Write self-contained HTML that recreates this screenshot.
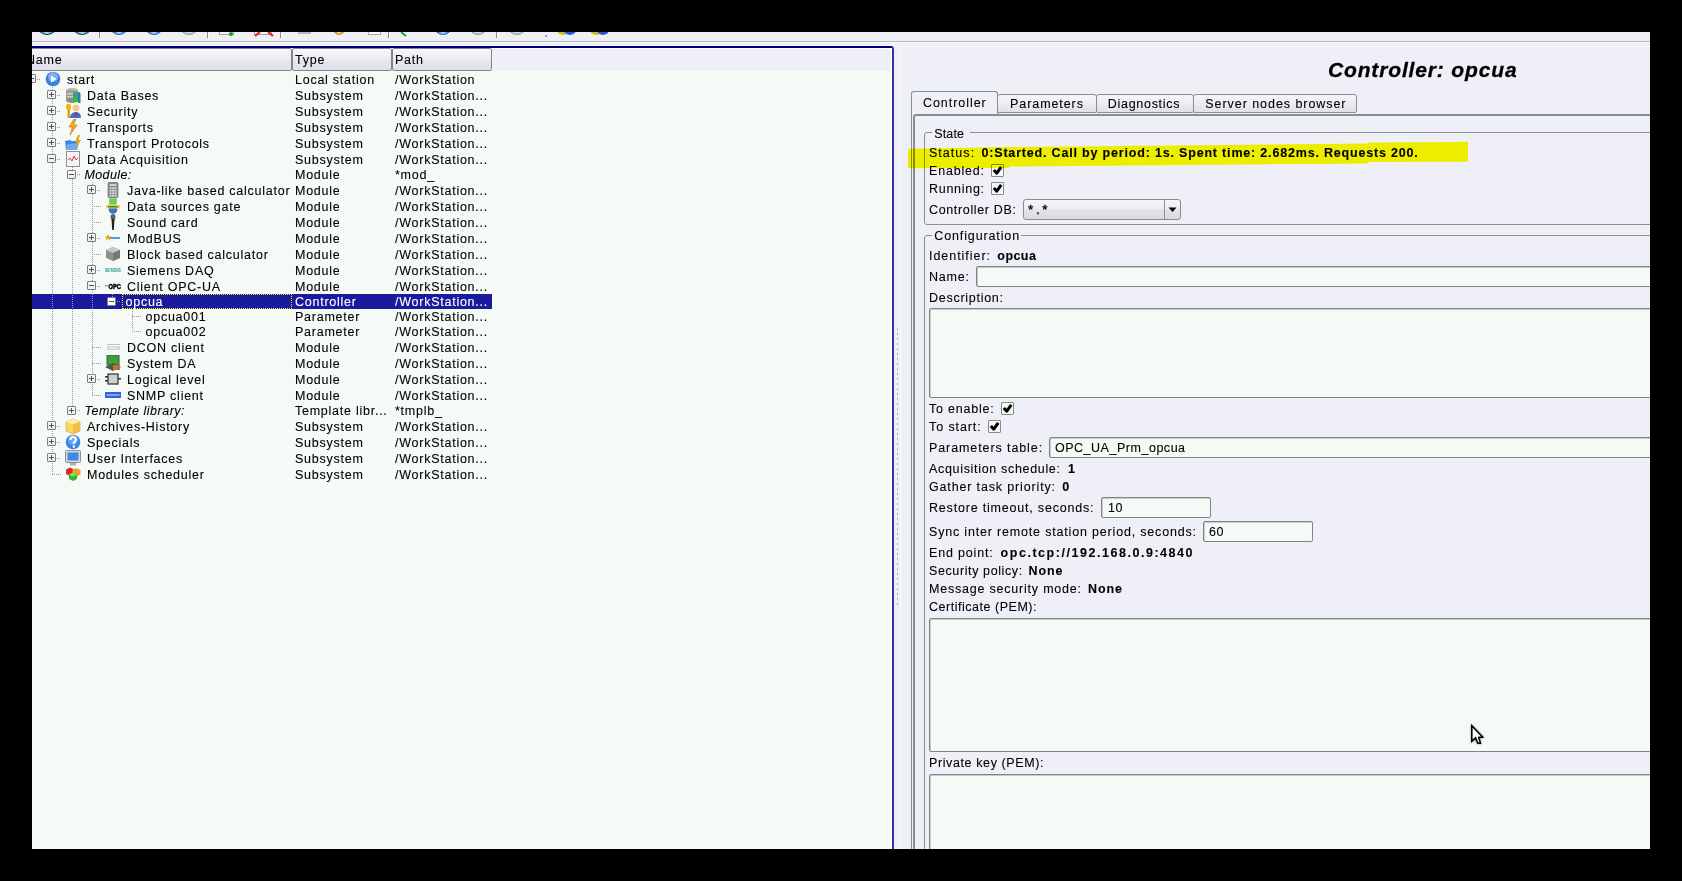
<!DOCTYPE html><html><head><meta charset="utf-8"><title>OpenSCADA</title><style>
*{box-sizing:border-box}
html,body{margin:0;padding:0}
body{width:1682px;height:881px;background:#000;position:relative;overflow:hidden;font-family:"Liberation Sans",sans-serif;font-size:12px;color:#000}
.a{position:absolute}
.t{position:absolute;white-space:pre;line-height:15px;height:15px;font-size:12.5px;letter-spacing:0.75px;-webkit-text-stroke:0.1px currentColor}
.b{font-weight:bold}
.i{font-style:italic}
#win{position:absolute;left:32px;top:32px;width:1618px;height:817px;background:#efeff7;overflow:hidden}
#in{position:absolute;left:-32px;top:-32px;width:1682px;height:881px}
.hs{position:absolute;top:48px;height:23px;border:1px solid #84848c;border-radius:2px;background:linear-gradient(#fdfdff 0,#f3f3f8 2px,#ececf3 10px,#e6e6ee 12px,#e1e1ea 100%)}
.exp{position:absolute;width:9px;height:9px;border:1px solid #7c7c84;border-radius:1px;background:linear-gradient(#fbfbfd,#ebebf0)}
.exp:before{content:"";position:absolute;left:1px;top:3px;width:5px;height:1px;background:#505058}
.exp.p:after{content:"";position:absolute;left:3px;top:1px;width:1px;height:5px;background:#505058}
.vl{position:absolute;width:1px;background-image:linear-gradient(#9a9aa2 50%,transparent 50%);background-size:1px 2px}
.hl{position:absolute;height:1px;background-image:linear-gradient(90deg,#9a9aa2 50%,transparent 50%);background-size:2px 1px}
.tab{position:absolute;border:1px solid #8a8f8f;border-bottom:none;border-radius:3px 3px 0 0;background:linear-gradient(#f6f6fa 0,#ececf2 50%,#e0e0e8 100%)}
.grp{position:absolute;border:1px solid #8c9090;border-radius:3px}
.inp{position:absolute;border:1px solid #7f8585;border-radius:2px;background:#f6faf6;box-shadow:inset 1px 1px 0 #c8cccc}
.cb{position:absolute;width:13px;height:13px;border:1px solid #858a8a;border-radius:1px;background:#f6faf6}
</style></head><body>
<div id="win"><div id="in">
<div class="a" style="left:32px;top:41px;width:1618px;height:1px;background:#b6b6be"></div>
<div class="a" style="left:32px;top:42px;width:1618px;height:1px;background:#fafafd"></div>
<div class="a" style="left:36px;top:13px;width:22px;height:22px;border-radius:50%;border:1.5px solid #1a3040;background:radial-gradient(ellipse at 50% 88%,#bfe6f5 0,#3aa0c8 35%,#1a3040 100%)"></div>
<div class="a" style="left:71px;top:13px;width:22px;height:22px;border-radius:50%;border:1.5px solid #1a3040;background:radial-gradient(ellipse at 50% 88%,#bfe6f5 0,#3aa0c8 35%,#1a3040 100%)"></div>
<div class="a" style="left:109px;top:15px;width:20px;height:20px;border-radius:50%;border:1.5px solid #2a60c0;background:radial-gradient(ellipse at 50% 88%,#bfe6f5 0,#3a86e0 35%,#2a60c0 100%)"></div>
<div class="a" style="left:144px;top:15px;width:20px;height:20px;border-radius:50%;border:1.5px solid #2a60c0;background:radial-gradient(ellipse at 50% 88%,#bfe6f5 0,#3a86e0 35%,#2a60c0 100%)"></div>
<div class="a" style="left:179px;top:15px;width:20px;height:20px;border-radius:50%;border:1.5px solid #909098;background:radial-gradient(ellipse at 50% 88%,#bfe6f5 0,#c8c8cc 35%,#909098 100%)"></div>
<div class="a" style="left:433px;top:15px;width:20px;height:20px;border-radius:50%;border:1.5px solid #2a60c0;background:radial-gradient(ellipse at 50% 88%,#bfe6f5 0,#3a86e0 35%,#2a60c0 100%)"></div>
<div class="a" style="left:468px;top:15px;width:20px;height:20px;border-radius:50%;border:1.5px solid #909098;background:radial-gradient(ellipse at 50% 88%,#bfe6f5 0,#c8c8cc 35%,#909098 100%)"></div>
<div class="a" style="left:507px;top:15px;width:20px;height:20px;border-radius:50%;border:1.5px solid #909098;background:radial-gradient(ellipse at 50% 88%,#bfe6f5 0,#c8c8cc 35%,#909098 100%)"></div>
<div class="a" style="left:333px;top:23px;width:12px;height:12px;border-radius:50%;border:1.5px solid #e08010;background:radial-gradient(ellipse at 50% 88%,#bfe6f5 0,#f0a020 35%,#e08010 100%)"></div>
<div class="a" style="left:99px;top:32px;width:1px;height:6px;background:#8c8c94"></div>
<div class="a" style="left:100px;top:32px;width:1px;height:6px;background:#fbfbfd"></div>
<div class="a" style="left:207px;top:32px;width:1px;height:6px;background:#8c8c94"></div>
<div class="a" style="left:208px;top:32px;width:1px;height:6px;background:#fbfbfd"></div>
<div class="a" style="left:280px;top:32px;width:1px;height:6px;background:#8c8c94"></div>
<div class="a" style="left:281px;top:32px;width:1px;height:6px;background:#fbfbfd"></div>
<div class="a" style="left:388px;top:32px;width:1px;height:6px;background:#8c8c94"></div>
<div class="a" style="left:389px;top:32px;width:1px;height:6px;background:#fbfbfd"></div>
<div class="a" style="left:496px;top:32px;width:1px;height:6px;background:#8c8c94"></div>
<div class="a" style="left:497px;top:32px;width:1px;height:6px;background:#fbfbfd"></div>
<div class="a" style="left:219px;top:32px;width:15px;height:3px;border:1px solid #a0a0a8;border-top:none;background:#f4f4f8"></div>
<div class="a" style="left:229px;top:32px;width:4px;height:4px;border-radius:50%;background:#10a030"></div>
<div class="a" style="left:254px;top:32px;width:18px;height:3px;border:1px solid #a0a0a8;border-top:none;background:#f4f4f8"></div>
<svg class="a" style="left:252px;top:30px" width="24" height="8"><path d="M3 6 L8 2 M16 2 L21 6" stroke="#e02020" stroke-width="2.2"/></svg>
<div class="a" style="left:298px;top:32px;width:13px;height:2px;background:#b8b8c0"></div>
<div class="a" style="left:368px;top:32px;width:13px;height:3px;border:1px solid #a8a8b0;border-top:none;background:#fff"></div>
<svg class="a" style="left:400px;top:30px" width="10" height="8"><path d="M1 2 L6 6" stroke="#20a040" stroke-width="2"/></svg>
<div class="a" style="left:545px;top:35px;width:2px;height:2px;background:#a0a0a0"></div>
<svg class="a" style="left:557px;top:26px" width="20" height="10"><ellipse cx="6" cy="4" rx="6" ry="5" fill="#c8c020"/><ellipse cx="13" cy="4" rx="6" ry="5" fill="#2a5ad0"/></svg>
<svg class="a" style="left:590px;top:26px" width="20" height="10"><ellipse cx="6" cy="4" rx="6" ry="5" fill="#c8c020"/><ellipse cx="13" cy="4" rx="6" ry="5" fill="#2a5ad0"/></svg>
<div class="a" style="left:32px;top:45px;width:863px;height:1px;background:#fafafd"></div>
<div class="a" style="left:20px;top:46px;width:874px;height:820px;border-top:2px solid #00007e;border-right:2px solid #3535ab;border-radius:0 3px 0 0"></div>
<div class="a" style="left:32px;top:48px;width:859px;height:1px;background:#ffffff"></div>
<div class="a" style="left:891px;top:48px;width:1px;height:801px;background:#ffffff"></div>
<div class="a" style="left:32px;top:49px;width:859px;height:22px;background:#efeff7"></div>
<div class="a" style="left:32px;top:71px;width:859px;height:778px;background:#f6faf6"></div>
<div class="hs" style="left:20px;width:272px"></div>
<div class="hs" style="left:292px;width:100px"></div>
<div class="hs" style="left:392px;width:100px"></div>
<div class="t" style="left:26px;top:53px">Name</div>
<div class="t" style="left:295px;top:53px">Type</div>
<div class="t" style="left:395px;top:53px">Path</div>
<div class="a" style="left:897px;top:328px;width:1px;height:2px;background:#b0b0b8"></div>
<div class="a" style="left:897px;top:333px;width:1px;height:2px;background:#b0b0b8"></div>
<div class="a" style="left:897px;top:338px;width:1px;height:2px;background:#b0b0b8"></div>
<div class="a" style="left:897px;top:343px;width:1px;height:2px;background:#b0b0b8"></div>
<div class="a" style="left:897px;top:348px;width:1px;height:2px;background:#b0b0b8"></div>
<div class="a" style="left:897px;top:353px;width:1px;height:2px;background:#b0b0b8"></div>
<div class="a" style="left:897px;top:358px;width:1px;height:2px;background:#b0b0b8"></div>
<div class="a" style="left:897px;top:363px;width:1px;height:2px;background:#b0b0b8"></div>
<div class="a" style="left:897px;top:368px;width:1px;height:2px;background:#b0b0b8"></div>
<div class="a" style="left:897px;top:373px;width:1px;height:2px;background:#b0b0b8"></div>
<div class="a" style="left:897px;top:378px;width:1px;height:2px;background:#b0b0b8"></div>
<div class="a" style="left:897px;top:383px;width:1px;height:2px;background:#b0b0b8"></div>
<div class="a" style="left:897px;top:388px;width:1px;height:2px;background:#b0b0b8"></div>
<div class="a" style="left:897px;top:393px;width:1px;height:2px;background:#b0b0b8"></div>
<div class="a" style="left:897px;top:398px;width:1px;height:2px;background:#b0b0b8"></div>
<div class="a" style="left:897px;top:403px;width:1px;height:2px;background:#b0b0b8"></div>
<div class="a" style="left:897px;top:408px;width:1px;height:2px;background:#b0b0b8"></div>
<div class="a" style="left:897px;top:413px;width:1px;height:2px;background:#b0b0b8"></div>
<div class="a" style="left:897px;top:418px;width:1px;height:2px;background:#b0b0b8"></div>
<div class="a" style="left:897px;top:423px;width:1px;height:2px;background:#b0b0b8"></div>
<div class="a" style="left:897px;top:428px;width:1px;height:2px;background:#b0b0b8"></div>
<div class="a" style="left:897px;top:433px;width:1px;height:2px;background:#b0b0b8"></div>
<div class="a" style="left:897px;top:438px;width:1px;height:2px;background:#b0b0b8"></div>
<div class="a" style="left:897px;top:443px;width:1px;height:2px;background:#b0b0b8"></div>
<div class="a" style="left:897px;top:448px;width:1px;height:2px;background:#b0b0b8"></div>
<div class="a" style="left:897px;top:453px;width:1px;height:2px;background:#b0b0b8"></div>
<div class="a" style="left:897px;top:458px;width:1px;height:2px;background:#b0b0b8"></div>
<div class="a" style="left:897px;top:463px;width:1px;height:2px;background:#b0b0b8"></div>
<div class="a" style="left:897px;top:468px;width:1px;height:2px;background:#b0b0b8"></div>
<div class="a" style="left:897px;top:473px;width:1px;height:2px;background:#b0b0b8"></div>
<div class="a" style="left:897px;top:478px;width:1px;height:2px;background:#b0b0b8"></div>
<div class="a" style="left:897px;top:483px;width:1px;height:2px;background:#b0b0b8"></div>
<div class="a" style="left:897px;top:488px;width:1px;height:2px;background:#b0b0b8"></div>
<div class="a" style="left:897px;top:493px;width:1px;height:2px;background:#b0b0b8"></div>
<div class="a" style="left:897px;top:498px;width:1px;height:2px;background:#b0b0b8"></div>
<div class="a" style="left:897px;top:503px;width:1px;height:2px;background:#b0b0b8"></div>
<div class="a" style="left:897px;top:508px;width:1px;height:2px;background:#b0b0b8"></div>
<div class="a" style="left:897px;top:513px;width:1px;height:2px;background:#b0b0b8"></div>
<div class="a" style="left:897px;top:518px;width:1px;height:2px;background:#b0b0b8"></div>
<div class="a" style="left:897px;top:523px;width:1px;height:2px;background:#b0b0b8"></div>
<div class="a" style="left:897px;top:528px;width:1px;height:2px;background:#b0b0b8"></div>
<div class="a" style="left:897px;top:533px;width:1px;height:2px;background:#b0b0b8"></div>
<div class="a" style="left:897px;top:538px;width:1px;height:2px;background:#b0b0b8"></div>
<div class="a" style="left:897px;top:543px;width:1px;height:2px;background:#b0b0b8"></div>
<div class="a" style="left:897px;top:548px;width:1px;height:2px;background:#b0b0b8"></div>
<div class="a" style="left:897px;top:553px;width:1px;height:2px;background:#b0b0b8"></div>
<div class="a" style="left:897px;top:558px;width:1px;height:2px;background:#b0b0b8"></div>
<div class="a" style="left:897px;top:563px;width:1px;height:2px;background:#b0b0b8"></div>
<div class="a" style="left:897px;top:568px;width:1px;height:2px;background:#b0b0b8"></div>
<div class="a" style="left:897px;top:573px;width:1px;height:2px;background:#b0b0b8"></div>
<div class="a" style="left:897px;top:578px;width:1px;height:2px;background:#b0b0b8"></div>
<div class="a" style="left:897px;top:583px;width:1px;height:2px;background:#b0b0b8"></div>
<div class="a" style="left:897px;top:588px;width:1px;height:2px;background:#b0b0b8"></div>
<div class="a" style="left:897px;top:593px;width:1px;height:2px;background:#b0b0b8"></div>
<div class="a" style="left:897px;top:598px;width:1px;height:2px;background:#b0b0b8"></div>
<div class="a" style="left:897px;top:603px;width:1px;height:2px;background:#b0b0b8"></div>
<div class="a" style="left:32px;top:294px;width:460px;height:15px;background:#1a1a9e"></div>
<div class="vl" style="left:52px;top:87px;height:388px"></div>
<div class="vl" style="left:72px;top:167px;height:244px"></div>
<div class="vl" style="left:92px;top:182px;height:214px"></div>
<div class="vl" style="left:112px;top:294px;height:8px"></div>
<div class="vl" style="left:132px;top:309px;height:23px"></div>
<div class="hl" style="left:37px;top:79px;width:4px"></div>
<div class="exp " style="left:27px;top:74px;"></div>
<svg class="a" style="left:45px;top:71px" width="16" height="16" viewBox="0 0 16 16"><circle cx="8" cy="8" r="7.3" fill="#3b7fe0"/><circle cx="8" cy="6" r="5" fill="#9cc2f4" opacity=".7"/><path d="M6 4.5 L11.5 8 L6 11.5 Z" fill="#fff"/></svg>
<div class="t" style="left:67px;top:73px;">start</div>
<div class="t" style="left:295px;top:73px;">Local station</div>
<div class="t" style="left:395px;top:73px;">/WorkStation</div>
<div class="hl" style="left:57px;top:95px;width:4px"></div>
<div class="exp p" style="left:47px;top:90px;"></div>
<svg class="a" style="left:65px;top:87px" width="16" height="16" viewBox="0 0 16 16"><ellipse cx="7" cy="3.5" rx="6" ry="2.5" fill="#b8b8b8"/><rect x="1" y="3.5" width="12" height="10" fill="#9a9a9a"/><ellipse cx="7" cy="13.5" rx="6" ry="2.5" fill="#8a8a8a"/><rect x="2" y="6" width="9" height="1.5" fill="#d0d0d0"/><rect x="2" y="9" width="9" height="1.5" fill="#d0d0d0"/><rect x="8" y="5" width="7" height="10" fill="#38b838"/><rect x="9" y="7" width="5" height="3" fill="#5a7ae0"/><rect x="13" y="6" width="2.5" height="10" fill="#2a80b0"/></svg>
<div class="t" style="left:87px;top:89px;">Data Bases</div>
<div class="t" style="left:295px;top:89px;">Subsystem</div>
<div class="t" style="left:395px;top:89px;">/WorkStation...</div>
<div class="hl" style="left:57px;top:111px;width:4px"></div>
<div class="exp p" style="left:47px;top:106px;"></div>
<svg class="a" style="left:65px;top:103px" width="16" height="16" viewBox="0 0 16 16"><rect x="1" y="1" width="5" height="6" rx="2" fill="#f0b800"/><rect x="2.5" y="6" width="2.5" height="9" fill="#e8a000"/><circle cx="11" cy="5" r="3.5" fill="#f0c890"/><path d="M5 15 Q5 9 11 9 Q16 9 16 15 Z" fill="#3a70d8"/><rect x="10.3" y="9" width="1.4" height="5" fill="#d02020"/></svg>
<div class="t" style="left:87px;top:105px;">Security</div>
<div class="t" style="left:295px;top:105px;">Subsystem</div>
<div class="t" style="left:395px;top:105px;">/WorkStation...</div>
<div class="hl" style="left:57px;top:127px;width:4px"></div>
<div class="exp p" style="left:47px;top:122px;"></div>
<svg class="a" style="left:65px;top:119px" width="16" height="16" viewBox="0 0 16 16"><path d="M9 0 L4 8 L7.5 8 L5 16 L12 6 L8.5 6 L11 0 Z" fill="#f0b010" stroke="#d06010" stroke-width=".6"/></svg>
<div class="t" style="left:87px;top:121px;">Transports</div>
<div class="t" style="left:295px;top:121px;">Subsystem</div>
<div class="t" style="left:395px;top:121px;">/WorkStation...</div>
<div class="hl" style="left:57px;top:143px;width:4px"></div>
<div class="exp p" style="left:47px;top:138px;"></div>
<svg class="a" style="left:65px;top:135px" width="16" height="16" viewBox="0 0 16 16"><path d="M0 6 L5 5 L6 6 L12 6 L12 15 L1 15 Z" fill="#3a86e0"/><path d="M2 9 L14 8 L12 15 L1 15 Z" fill="#6aaaf0"/><path d="M13 0 L10 7 L12.5 7 L11 14 L16 5 L13.5 5 L15 0 Z" fill="#f0a010"/></svg>
<div class="t" style="left:87px;top:137px;">Transport Protocols</div>
<div class="t" style="left:295px;top:137px;">Subsystem</div>
<div class="t" style="left:395px;top:137px;">/WorkStation...</div>
<div class="hl" style="left:57px;top:159px;width:4px"></div>
<div class="exp " style="left:47px;top:154px;"></div>
<svg class="a" style="left:65px;top:151px" width="16" height="16" viewBox="0 0 16 16"><rect x="1.5" y="0.5" width="13" height="15" fill="#f4f4f4" stroke="#909090"/><path d="M3 9 L5 7 L7 10 L9 5 L11 9 L13 7" stroke="#e04040" fill="none" stroke-width="1"/></svg>
<div class="t" style="left:87px;top:153px;">Data Acquisition</div>
<div class="t" style="left:295px;top:153px;">Subsystem</div>
<div class="t" style="left:395px;top:153px;">/WorkStation...</div>
<div class="hl" style="left:77px;top:174px;width:4px"></div>
<div class="exp " style="left:67px;top:170px;"></div>
<div class="t i" style="left:84.5px;top:168px;letter-spacing:0.372px;">Module:</div>
<div class="t" style="left:295px;top:168px;">Module</div>
<div class="t" style="left:395px;top:168px;">*mod_</div>
<div class="hl" style="left:97px;top:190px;width:4px"></div>
<div class="exp p" style="left:87px;top:185px;"></div>
<svg class="a" style="left:105px;top:182px" width="16" height="16" viewBox="0 0 16 16"><rect x="3" y="0.5" width="10" height="15" rx="1" fill="#8a8a8a" stroke="#606060" stroke-width=".6"/><rect x="4.5" y="2" width="7" height="2" fill="#c8d8c8"/><g fill="#e0e0e0"><rect x="4.5" y="5.5" width="2" height="1.5"/><rect x="7" y="5.5" width="2" height="1.5"/><rect x="9.5" y="5.5" width="2" height="1.5"/><rect x="4.5" y="8" width="2" height="1.5"/><rect x="7" y="8" width="2" height="1.5"/><rect x="9.5" y="8" width="2" height="1.5"/><rect x="4.5" y="10.5" width="2" height="1.5"/><rect x="7" y="10.5" width="2" height="1.5"/><rect x="9.5" y="10.5" width="2" height="1.5"/><rect x="4.5" y="13" width="2" height="1.5"/><rect x="7" y="13" width="2" height="1.5"/><rect x="9.5" y="13" width="2" height="1.5"/></g></svg>
<div class="t" style="left:127px;top:184px;">Java-like based calculator</div>
<div class="t" style="left:295px;top:184px;">Module</div>
<div class="t" style="left:395px;top:184px;">/WorkStation...</div>
<div class="hl" style="left:92px;top:206px;width:9px"></div>
<svg class="a" style="left:105px;top:198px" width="16" height="16" viewBox="0 0 16 16"><rect x="4.5" y="0.5" width="7" height="6" fill="#50e050" stroke="#e08080" stroke-width=".5"/><circle cx="8" cy="11.5" r="4.3" fill="#3a70d0"/><rect x="1" y="7" width="14" height="3.5" fill="#e8e030"/><rect x="3" y="8" width="10" height="1.5" fill="#4a7a50"/></svg>
<div class="t" style="left:127px;top:200px;">Data sources gate</div>
<div class="t" style="left:295px;top:200px;">Module</div>
<div class="t" style="left:395px;top:200px;">/WorkStation...</div>
<div class="hl" style="left:92px;top:222px;width:9px"></div>
<svg class="a" style="left:105px;top:214px" width="16" height="16" viewBox="0 0 16 16"><ellipse cx="8" cy="3" rx="2.5" ry="3" fill="#606060"/><path d="M6.5 5 L9.5 5 L8.8 16 L7.2 16 Z" fill="#202020"/></svg>
<div class="t" style="left:127px;top:216px;">Sound card</div>
<div class="t" style="left:295px;top:216px;">Module</div>
<div class="t" style="left:395px;top:216px;">/WorkStation...</div>
<div class="hl" style="left:97px;top:238px;width:4px"></div>
<div class="exp p" style="left:87px;top:233px;"></div>
<svg class="a" style="left:105px;top:230px" width="16" height="16" viewBox="0 0 16 16"><path d="M3 4 L4 6.5 L6.5 6.5 L4.5 8 L5.3 10.5 L3 9 L0.7 10.5 L1.5 8 L-0.5 6.5 L2 6.5 Z" fill="#f0a010"/><rect x="5" y="7" width="10" height="2" fill="#5a9ad0"/></svg>
<div class="t" style="left:127px;top:232px;">ModBUS</div>
<div class="t" style="left:295px;top:232px;">Module</div>
<div class="t" style="left:395px;top:232px;">/WorkStation...</div>
<div class="hl" style="left:92px;top:254px;width:9px"></div>
<svg class="a" style="left:105px;top:246px" width="16" height="16" viewBox="0 0 16 16"><path d="M8 1 L15 4 L15 12 L8 15 L1 12 L1 4 Z" fill="#909090"/><path d="M8 1 L15 4 L8 7 L1 4 Z" fill="#c8c8c8"/><path d="M8 7 L15 4 L15 12 L8 15 Z" fill="#787878"/></svg>
<div class="t" style="left:127px;top:248px;">Block based calculator</div>
<div class="t" style="left:295px;top:248px;">Module</div>
<div class="t" style="left:395px;top:248px;">/WorkStation...</div>
<div class="hl" style="left:97px;top:270px;width:4px"></div>
<div class="exp p" style="left:87px;top:265px;"></div>
<svg class="a" style="left:105px;top:262px" width="16" height="16" viewBox="0 0 16 16"><text x="0" y="10" font-family="Liberation Sans" font-size="4.6" font-weight="bold" fill="#2aa0a0" textLength="16" lengthAdjust="spacingAndGlyphs">SIEMENS</text></svg>
<div class="t" style="left:127px;top:264px;">Siemens DAQ</div>
<div class="t" style="left:295px;top:264px;">Module</div>
<div class="t" style="left:395px;top:264px;">/WorkStation...</div>
<div class="hl" style="left:97px;top:286px;width:4px"></div>
<div class="exp " style="left:87px;top:281px;"></div>
<svg class="a" style="left:105px;top:278px" width="16" height="16" viewBox="0 0 16 16"><text x="3.5" y="10.5" font-family="Liberation Sans" font-size="7" font-weight="bold" fill="#000" stroke="#000" stroke-width=".5" textLength="12.5" lengthAdjust="spacingAndGlyphs">OPC</text><rect x="0" y="7" width="4" height="1.5" fill="#a0a0a0"/></svg>
<div class="t" style="left:127px;top:280px;">Client OPC-UA</div>
<div class="t" style="left:295px;top:280px;">Module</div>
<div class="t" style="left:395px;top:280px;">/WorkStation...</div>
<div class="hl" style="left:117px;top:301px;width:4px"></div>
<div class="exp " style="left:107px;top:297px;background:#fff;"></div>
<div class="t" style="left:125.5px;top:295px;color:#fff;">opcua</div>
<div class="t" style="left:295px;top:295px;color:#fff;">Controller</div>
<div class="t" style="left:395px;top:295px;color:#fff;">/WorkStation...</div>
<div class="hl" style="left:132px;top:316px;width:9px"></div>
<div class="t" style="left:145.5px;top:310px;">opcua001</div>
<div class="t" style="left:295px;top:310px;">Parameter</div>
<div class="t" style="left:395px;top:310px;">/WorkStation...</div>
<div class="hl" style="left:132px;top:331px;width:9px"></div>
<div class="t" style="left:145.5px;top:325px;">opcua002</div>
<div class="t" style="left:295px;top:325px;">Parameter</div>
<div class="t" style="left:395px;top:325px;">/WorkStation...</div>
<div class="hl" style="left:92px;top:347px;width:9px"></div>
<svg class="a" style="left:105px;top:339px" width="16" height="16" viewBox="0 0 16 16"><rect x="2" y="5" width="13" height="1" fill="#c0c0c0"/><text x="2" y="10.5" font-family="Liberation Sans" font-size="5" fill="#a0a0a0" textLength="13" lengthAdjust="spacingAndGlyphs">DCON</text></svg>
<div class="t" style="left:127px;top:341px;">DCON client</div>
<div class="t" style="left:295px;top:341px;">Module</div>
<div class="t" style="left:395px;top:341px;">/WorkStation...</div>
<div class="hl" style="left:92px;top:363px;width:9px"></div>
<svg class="a" style="left:105px;top:355px" width="16" height="16" viewBox="0 0 16 16"><rect x="2" y="0" width="12" height="10" fill="#40a030" stroke="#305080" stroke-width="1"/><path d="M0 12 L8 8 L16 12 L8 16 Z" fill="#406040"/><rect x="8" y="10" width="7" height="5" fill="#c07030"/></svg>
<div class="t" style="left:127px;top:357px;">System DA</div>
<div class="t" style="left:295px;top:357px;">Module</div>
<div class="t" style="left:395px;top:357px;">/WorkStation...</div>
<div class="hl" style="left:97px;top:379px;width:4px"></div>
<div class="exp p" style="left:87px;top:374px;"></div>
<svg class="a" style="left:105px;top:371px" width="16" height="16" viewBox="0 0 16 16"><rect x="3" y="3" width="10" height="10" fill="#d0d0d0" stroke="#303030" stroke-width="1.2"/><rect x="0" y="5" width="3" height="1.5" fill="#303030"/><rect x="0" y="9" width="3" height="1.5" fill="#303030"/><rect x="13" y="7" width="3" height="1.5" fill="#303030"/></svg>
<div class="t" style="left:127px;top:373px;">Logical level</div>
<div class="t" style="left:295px;top:373px;">Module</div>
<div class="t" style="left:395px;top:373px;">/WorkStation...</div>
<div class="hl" style="left:92px;top:395px;width:9px"></div>
<svg class="a" style="left:105px;top:387px" width="16" height="16" viewBox="0 0 16 16"><rect x="0" y="5" width="16" height="6" fill="#3462de"/><rect x="1.5" y="7" width="13" height="2" fill="#9ab0f4" opacity=".8"/></svg>
<div class="t" style="left:127px;top:389px;">SNMP client</div>
<div class="t" style="left:295px;top:389px;">Module</div>
<div class="t" style="left:395px;top:389px;">/WorkStation...</div>
<div class="hl" style="left:77px;top:410px;width:4px"></div>
<div class="exp p" style="left:67px;top:406px;"></div>
<div class="t i" style="left:84.5px;top:404px;letter-spacing:0.510px;">Template library:</div>
<div class="t" style="left:295px;top:404px;">Template libr...</div>
<div class="t" style="left:395px;top:404px;">*tmplb_</div>
<div class="hl" style="left:57px;top:426px;width:4px"></div>
<div class="exp p" style="left:47px;top:421px;"></div>
<svg class="a" style="left:65px;top:418px" width="16" height="16" viewBox="0 0 16 16"><path d="M1 4 L8 1 L15 4 L15 13 L8 16 L1 13 Z" fill="#f8d860" stroke="#d0a030" stroke-width=".6"/><path d="M1 4 L8 1 L15 4 L8 6 Z" fill="#fff0b0"/><path d="M8 6 L15 4 L15 13 L8 16 Z" fill="#f0c040"/></svg>
<div class="t" style="left:87px;top:420px;">Archives-History</div>
<div class="t" style="left:295px;top:420px;">Subsystem</div>
<div class="t" style="left:395px;top:420px;">/WorkStation...</div>
<div class="hl" style="left:57px;top:442px;width:4px"></div>
<div class="exp p" style="left:47px;top:437px;"></div>
<svg class="a" style="left:65px;top:434px" width="16" height="16" viewBox="0 0 16 16"><circle cx="8" cy="8" r="7.3" fill="#3a86e8"/><circle cx="8" cy="6" r="5" fill="#8ab8f4" opacity=".6"/><path d="M5.5 6 Q5.5 3 8 3 Q10.8 3 10.8 5.7 Q10.8 7.5 8.8 8.5 L8.8 10" stroke="#fff" stroke-width="2" fill="none"/><circle cx="8.8" cy="12.5" r="1.2" fill="#fff"/></svg>
<div class="t" style="left:87px;top:436px;">Specials</div>
<div class="t" style="left:295px;top:436px;">Subsystem</div>
<div class="t" style="left:395px;top:436px;">/WorkStation...</div>
<div class="hl" style="left:57px;top:458px;width:4px"></div>
<div class="exp p" style="left:47px;top:453px;"></div>
<svg class="a" style="left:65px;top:450px" width="16" height="16" viewBox="0 0 16 16"><rect x="0.5" y="0.5" width="15" height="12" rx="1" fill="#d8d8d8" stroke="#909090"/><rect x="2.5" y="2.5" width="11" height="8" fill="#3a8ae8"/><rect x="5" y="13" width="6" height="2.5" fill="#b0b0b0"/></svg>
<div class="t" style="left:87px;top:452px;">User Interfaces</div>
<div class="t" style="left:295px;top:452px;">Subsystem</div>
<div class="t" style="left:395px;top:452px;">/WorkStation...</div>
<div class="hl" style="left:52px;top:474px;width:9px"></div>
<svg class="a" style="left:65px;top:466px" width="16" height="16" viewBox="0 0 16 16"><path d="M5 1.5 L9 3.5 L9 8 L5 10 L1 8 L1 3.5 Z" fill="#e02828"/><path d="M11.5 2 L15.5 4 L15.5 8.5 L11.5 10.5 L7.5 8.5 L7.5 4 Z" fill="#f5a020"/><path d="M8 6.5 L12 8.5 L12 13 L8 15 L4 13 L4 8.5 Z" fill="#38b830"/><path d="M8 6.5 L12 8.5 L8 10.5 L4 8.5 Z" fill="#80e070"/></svg>
<div class="t" style="left:87px;top:468px;">Modules scheduler</div>
<div class="t" style="left:295px;top:468px;">Subsystem</div>
<div class="t" style="left:395px;top:468px;">/WorkStation...</div>
<div class="a" style="left:122px;top:294px;width:170px;height:15px;border:1px dotted #f0f000"></div>
<div class="a" style="left:900px;top:46px;width:750px;height:1px;background:#f8fbf8"></div>
<div class="a" style="left:900px;top:46px;width:1px;height:803px;background:#f8fbf8"></div>
<div class="t b i" style="left:1328px;top:58px;font-size:21px;line-height:24px;height:24px;letter-spacing:0.85px;-webkit-text-stroke:0.3px #000">Controller: opcua</div>
<div class="tab" style="left:911px;top:91px;width:87px;height:24px;background:#efeff7;border-color:#879090;z-index:2"></div>
<div class="tab" style="left:997px;top:94px;width:100px;height:19px;border-bottom:1px solid #8a8f8f;border-radius:3px 3px 2px 2px"></div>
<div class="tab" style="left:1096px;top:94px;width:98px;height:19px;border-bottom:1px solid #8a8f8f;border-radius:3px 3px 2px 2px"></div>
<div class="tab" style="left:1193px;top:94px;width:164px;height:19px;border-bottom:1px solid #8a8f8f;border-radius:3px 3px 2px 2px"></div>
<div class="t" style="left:923.0px;top:96px;letter-spacing:0.946px;z-index:4">Controller</div>
<div class="t" style="left:1010.1px;top:97px;letter-spacing:0.912px;">Parameters</div>
<div class="t" style="left:1107.8px;top:97px;letter-spacing:0.708px;">Diagnostics</div>
<div class="t" style="left:1205.3px;top:97px;letter-spacing:0.944px;">Server nodes browser</div>
<div class="a" style="left:913px;top:114px;width:760px;height:760px;border:1px solid #859090;border-top-width:2px;border-left-width:2px;border-radius:3px;z-index:3"></div>
<div class="a" style="left:911px;top:93px;width:1px;height:756px;background:#879090;z-index:3"></div>
<div class="grp" style="left:924px;top:132px;width:736px;height:93px"></div>
<div class="a" style="left:932px;top:131px;width:38px;height:3px;background:#efeff7"></div>
<div class="grp" style="left:924px;top:235px;width:736px;height:666px"></div>
<div class="a" style="left:932px;top:234px;width:89px;height:3px;background:#efeff7"></div>
<div class="t" style="left:934.3px;top:127px;letter-spacing:0.128px;">State</div>
<div class="t" style="left:934.3px;top:229px;letter-spacing:0.870px;">Configuration</div>
<div class="t" style="left:929.0px;top:146px;letter-spacing:1.032px;">Status:</div>
<div class="t b" style="left:981.5px;top:146px;letter-spacing:0.815px;">0:Started. Call by period: 1s. Spent time: 2.682ms. Requests 200.</div>
<div class="t" style="left:929.0px;top:164px;letter-spacing:0.820px;">Enabled:</div>
<div class="t" style="left:929.0px;top:182px;letter-spacing:0.722px;">Running:</div>
<div class="cb" style="left:991px;top:164px"></div>
<svg class="a" style="left:991px;top:164px" width="13" height="13"><path d="M2.8 6 L5.8 9.2 L10.2 2.8" fill="none" stroke="#000" stroke-width="3" stroke-linejoin="round"/></svg>
<div class="cb" style="left:991px;top:182px"></div>
<svg class="a" style="left:991px;top:182px" width="13" height="13"><path d="M2.8 6 L5.8 9.2 L10.2 2.8" fill="none" stroke="#000" stroke-width="3" stroke-linejoin="round"/></svg>
<div class="t" style="left:929.0px;top:203px;letter-spacing:0.646px;">Controller DB:</div>
<div class="a" style="left:1023px;top:199px;width:158px;height:21px;border:1px solid #878c8c;border-radius:3px;background:linear-gradient(#f6f6fa 0,#ececf2 45%,#e2e2ea 55%,#dadae2 100%)"></div>
<div class="a" style="left:1164px;top:200px;width:1px;height:19px;background:#8d9292"></div>
<svg class="a" style="left:1168px;top:207px" width="9" height="6"><path d="M0.5 0.5 L8.5 0.5 L4.5 5 Z" fill="#000"/></svg>
<div class="t" style="left:1028.0px;top:202px;letter-spacing:2.656px;font-size:13.5px;-webkit-text-stroke:0.35px #000">*.*</div>
<div class="t" style="left:929.0px;top:249px;letter-spacing:0.959px;">Identifier:</div>
<div class="t b" style="left:997.3px;top:249px;letter-spacing:0.443px;">opcua</div>
<div class="t" style="left:929.0px;top:270px;letter-spacing:0.797px;">Name:</div>
<div class="inp" style="left:976px;top:266px;width:724px;height:21px"></div>
<div class="t" style="left:929.0px;top:291px;letter-spacing:0.727px;">Description:</div>
<div class="inp" style="left:929px;top:308px;width:771px;height:90px"></div>
<div class="t" style="left:929.0px;top:402px;letter-spacing:0.790px;">To enable:</div>
<div class="cb" style="left:1001px;top:402px"></div>
<svg class="a" style="left:1001px;top:402px" width="13" height="13"><path d="M2.8 6 L5.8 9.2 L10.2 2.8" fill="none" stroke="#000" stroke-width="3" stroke-linejoin="round"/></svg>
<div class="t" style="left:929.0px;top:420px;letter-spacing:0.908px;">To start:</div>
<div class="cb" style="left:988px;top:420px"></div>
<svg class="a" style="left:988px;top:420px" width="13" height="13"><path d="M2.8 6 L5.8 9.2 L10.2 2.8" fill="none" stroke="#000" stroke-width="3" stroke-linejoin="round"/></svg>
<div class="t" style="left:929.0px;top:441px;letter-spacing:0.904px;">Parameters table:</div>
<div class="inp" style="left:1049px;top:437px;width:651px;height:21px"></div>
<div class="t" style="left:1054.9px;top:441px;letter-spacing:0.527px;">OPC_UA_Prm_opcua</div>
<div class="t" style="left:929.0px;top:462px;letter-spacing:0.677px;">Acquisition schedule:</div>
<div class="t b" style="left:1067.9px;top:462px;letter-spacing:1.000px;">1</div>
<div class="t" style="left:929.0px;top:480px;letter-spacing:0.848px;">Gather task priority:</div>
<div class="t b" style="left:1062.3px;top:480px;letter-spacing:1.000px;">0</div>
<div class="t" style="left:929.0px;top:501px;letter-spacing:0.805px;">Restore timeout, seconds:</div>
<div class="inp" style="left:1101px;top:497px;width:110px;height:21px"></div>
<div class="t" style="left:1107.9px;top:501px;letter-spacing:0.694px;">10</div>
<div class="t" style="left:929.0px;top:525px;letter-spacing:0.819px;">Sync inter remote station period, seconds:</div>
<div class="inp" style="left:1203px;top:521px;width:110px;height:21px"></div>
<div class="t" style="left:1208.9px;top:525px;letter-spacing:0.694px;">60</div>
<div class="t" style="left:929.0px;top:546px;letter-spacing:0.823px;">End point:</div>
<div class="t b" style="left:1000.6px;top:546px;letter-spacing:1.534px;">opc.tcp://192.168.0.9:4840</div>
<div class="t" style="left:929.0px;top:564px;letter-spacing:0.609px;">Security policy:</div>
<div class="t b" style="left:1028.6px;top:564px;letter-spacing:0.911px;">None</div>
<div class="t" style="left:929.0px;top:582px;letter-spacing:0.788px;">Message security mode:</div>
<div class="t b" style="left:1088.0px;top:582px;letter-spacing:0.911px;">None</div>
<div class="t" style="left:929.0px;top:600px;letter-spacing:0.523px;">Certificate (PEM):</div>
<div class="inp" style="left:929px;top:618px;width:771px;height:134px"></div>
<div class="t" style="left:929.0px;top:756px;letter-spacing:0.608px;">Private key (PEM):</div>
<div class="inp" style="left:929px;top:774px;width:771px;height:126px"></div>
<svg class="a" style="left:1465px;top:720px;z-index:20" width="24" height="30" viewBox="1465 720 24 30"><path d="M1471.8 725.8 L1471.8 741.2 L1475.6 737.9 L1477.8 743.2 L1480.4 743.2 L1478.7 737.4 L1482.6 737 Z" fill="#fff" stroke="#000" stroke-width="1.6" stroke-linejoin="miter" style="filter:drop-shadow(0.5px 0.8px 0.8px rgba(0,0,0,.45))"/></svg>
<svg class="a" style="left:0;top:0;mix-blend-mode:multiply;z-index:10" width="1682" height="881"><path d="M908 148.7 L1009 147 L1368 143.6 L1368 142.4 L1457 142 L1457 141.8 L1468 141.8 L1468 161.8 L1368 162 L1368 163.5 L1009 166.5 L1009 168 L908 168.3 Z" fill="#fdfd00"/></svg>
</div></div></body></html>
